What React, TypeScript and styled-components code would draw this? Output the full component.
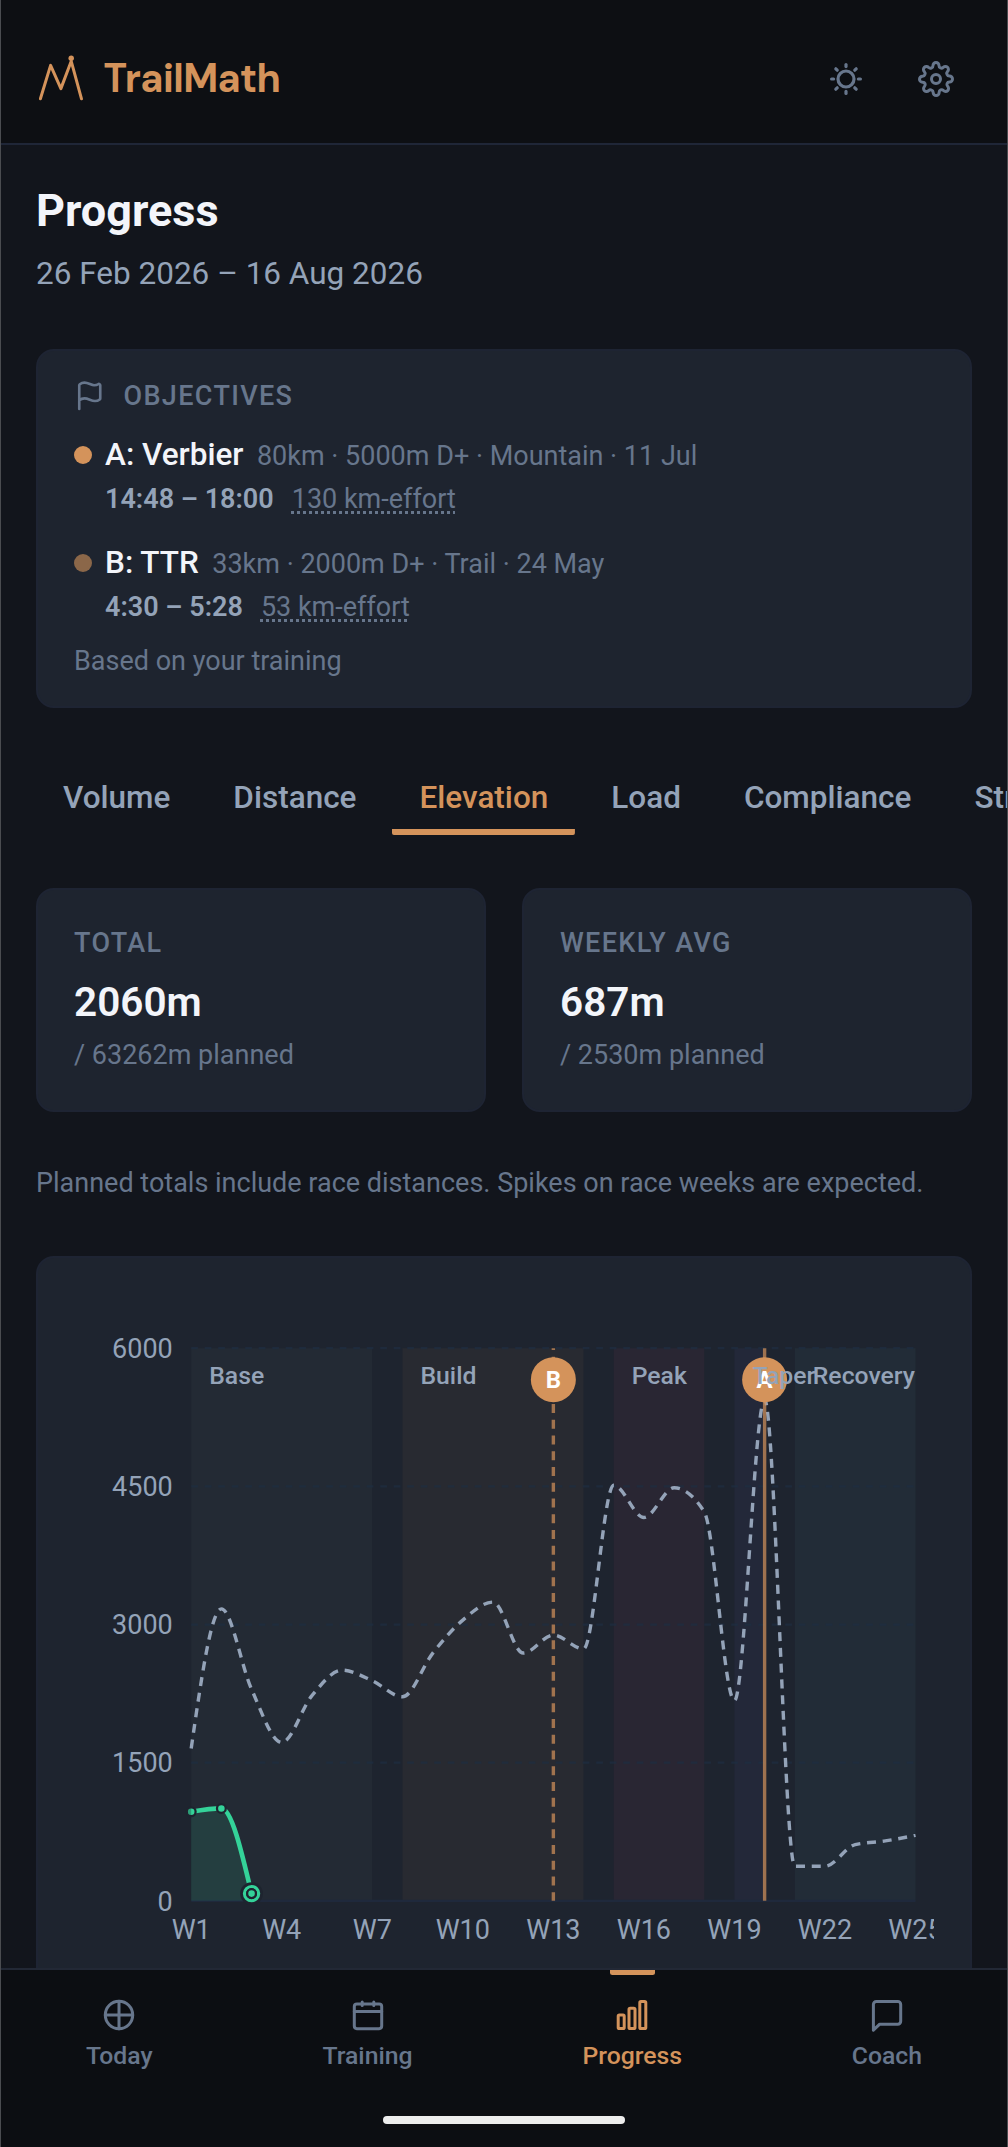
import React from "react";
import styled, { createGlobalStyle } from "styled-components";
import { Flag } from "lucide-react";

const c = {
  page: "#12151c",
  header: "#0d0f13",
  nav: "#0c0e12",
  card: "#1e242f",
  cardEdge: "#1e2433",
  line: "#1f2637",
  text: "#f3f5fa",
  soft: "#94a3b8",
  muted: "#67768c",
  accent: "#d4935b",
  green: "#34d399",
};

const Global = createGlobalStyle`
  * { box-sizing: border-box; }
  html, body { margin: 0; padding: 0; background: ${c.page}; }
  body { font-family: Roboto, "Liberation Sans", sans-serif; color: ${c.text}; }
`;

const Screen = styled.div`
  width: 1008px;
  height: 2147px;
  display: flex;
  flex-direction: column;
  overflow: hidden;
  background: ${c.page};
  box-shadow: inset 1px 0 #4a4c50, inset -1px 0 #4a4c50;
`;

const Header = styled.header`
  flex: none;
  height: 145px;
  margin: 0 1px;
  padding: 14px 53px 0 35px;
  display: flex;
  align-items: center;
  justify-content: space-between;
  background: ${c.header};
  border-bottom: 2px solid ${c.line};
`;

const Brand = styled.div`
  display: flex;
  align-items: center;
  gap: 13.5px;
`;

const BrandName = styled.span`
  font-family: "DM Sans", Inter, sans-serif;
  font-size: 39.5px;
  line-height: 48px;
  font-weight: 700;
  letter-spacing: -0.55px;
  color: ${c.accent};
`;

const HeaderActions = styled.div`
  display: flex;
  gap: 54px;
  color: ${c.muted};
`;

const Main = styled.main`
  flex: 1;
  min-height: 0;
  overflow: hidden;
  margin: 0 1px;
  padding: 39px 35px 0;
  display: flex;
  flex-direction: column;
`;

const Title = styled.h1`
  margin: 0;
  font-size: 45px;
  line-height: 54px;
  font-weight: 700;
`;

const Dates = styled.p`
  margin: 12px 0 0;
  font-size: 31.5px;
  line-height: 47px;
  color: ${c.soft};
`;

const Card = styled.section`
  flex: none;
  background: ${c.card};
  border: 2px solid ${c.cardEdge};
  border-radius: 18px;
`;

const ObjectivesCard = styled(Card)`
  height: 359px;
  margin-top: 52px;
  padding: 27px 36px 0;
`;

const Overline = styled.div`
  display: flex;
  align-items: center;
  gap: 18px;
  height: 36px;
  font-size: 27px;
  font-weight: 500;
  letter-spacing: 1.35px;
  color: ${c.muted};
`;

const Objective = styled.div<{ $first?: boolean }>`
  display: grid;
  grid-template-columns: 18px 1fr;
  column-gap: 13px;
  margin-top: ${(p) => (p.$first ? "17px" : "18px")};
`;

const Dot = styled.i<{ $dim?: boolean }>`
  width: 18px;
  height: 18px;
  margin-top: 15px;
  border-radius: 50%;
  background: ${(p) => (p.$dim ? "#8b6749" : c.accent)};
`;

const ObjectiveHead = styled.div`
  display: flex;
  align-items: baseline;
  gap: 13.5px;
  height: 47px;
  line-height: 47px;
`;

const ObjectiveName = styled.span`
  font-size: 31.5px;
  font-weight: 500;
`;

const Meta = styled.span`
  font-size: 27px;
  color: ${c.muted};
`;

const ObjectiveTimes = styled.div`
  grid-column: 2;
  display: flex;
  align-items: baseline;
  gap: 18px;
  height: 43px;
  line-height: 43px;
  font-size: 27px;
`;

const Estimate = styled.span`
  font-weight: 600;
  color: ${c.soft};
`;

const Effort = styled(Meta)`
  text-decoration: underline dotted;
  text-decoration-thickness: 3px;
  text-underline-offset: 3px;
  text-decoration-skip-ink: none;
`;

const Basis = styled.div`
  margin-top: 12px;
  font-size: 27px;
  line-height: 40px;
  color: ${c.muted};
`;

const Tabs = styled.nav`
  flex: none;
  display: flex;
  gap: 9px;
  height: 90px;
  margin: 45px -35px 0 0;
  overflow: hidden;
`;

const Tab = styled.button<{ $active?: boolean }>`
  flex: none;
  height: 82px;
  padding: 8px 27px 0;
  border: 0;
  background: linear-gradient(${(p) => (p.$active ? c.accent : "transparent")} 0 0) bottom / 100% 6px no-repeat;
  border-radius: 2px;
  font: 500 31.5px/74px Roboto, sans-serif;
  color: ${(p) => (p.$active ? c.accent : c.soft)};
  text-align: left;
`;

const Stats = styled.div`
  flex: none;
  display: grid;
  grid-template-columns: 1fr 1fr;
  gap: 36px;
  margin-top: 45px;
`;

const StatCard = styled(Card)`
  height: 224px;
  padding: 34px 36px 0;
`;

const StatLabel = styled.div`
  font-size: 27px;
  line-height: 38px;
  font-weight: 500;
  letter-spacing: 1.35px;
  color: ${c.muted};
`;

const StatValue = styled.div`
  margin-top: 9px;
  font-size: 40.5px;
  line-height: 62px;
  font-weight: 600;
`;

const StatPlan = styled.div`
  margin-top: 2px;
  font-size: 27px;
  line-height: 40px;
  color: ${c.muted};
`;

const Note = styled.p`
  margin: 51px 0 0;
  font-size: 27px;
  line-height: 40px;
  color: ${c.muted};
`;

const ChartCard = styled(Card)`
  height: 800px;
  margin-top: 53px;
  padding: 36px;
`;

const ChartSvg = styled.svg`
  display: block;
  width: 860px;
  height: 676px;
  overflow: hidden;
  font-family: Roboto, sans-serif;
`;

const NavBar = styled.nav`
  flex: none;
  height: 179px;
  margin: 0 1px;
  display: flex;
  flex-direction: column;
  align-items: center;
  background: ${c.nav};
  border-top: 2px solid #222835;
`;

const NavItems = styled.div`
  width: 100%;
  height: 146px;
  display: flex;
  justify-content: space-around;
`;

const NavItem = styled.a<{ $active?: boolean }>`
  display: flex;
  flex-direction: column;
  align-items: center;
  color: ${(p) => (p.$active ? c.accent : c.muted)};
  font-size: 24.75px;
  line-height: 30px;
  font-weight: 500;

  &::before {
    content: "";
    width: 45px;
    height: 5px;
    margin-bottom: 22px;
    border-radius: 0 0 2.5px 2.5px;
    background: ${(p) => (p.$active ? c.accent : "transparent")};
  }
`;

const NavLabel = styled.span`
  margin-top: 8px;
`;

const HomeBar = styled.div`
  width: 242px;
  height: 8px;
  border-radius: 4px;
  background: #ededed;
`;

/* ---------- icons ---------- */

const Logo = () => (
  <svg width="54" height="54" viewBox="0 0 54 54" fill="none" stroke={c.accent} strokeWidth="3" strokeLinecap="round" strokeLinejoin="round">
    <path d="M4.4 46.8 14.6 13.4 24.9 36.6 35.2 9.2 45.5 46.8" />
    <circle cx="35.2" cy="6.2" r="2.7" fill={c.accent} stroke="none" />
  </svg>
);

const SunIcon = () => (
  <svg width="36" height="36" viewBox="-18 -18 36 36" fill="none" stroke="currentColor" strokeWidth="3.2" strokeLinecap="round">
    <circle r="8" />
    {[0, 45, 90, 135, 180, 225, 270, 315].map((a) => (
      <path key={a} d="M0-12.4V-14.4" transform={`rotate(${a})`} />
    ))}
  </svg>
);

const GearIcon = () => (
  <svg width="36" height="36" viewBox="0 0 24 24" fill="none" stroke="currentColor" strokeWidth="2" strokeLinecap="round" strokeLinejoin="round">
    <circle cx="12" cy="12" r="3" />
    <path d="M19.4 15a1.65 1.65 0 0 0 .33 1.82l.06.06a2 2 0 1 1-2.83 2.83l-.06-.06a1.65 1.65 0 0 0-2.8 1.17V21a2 2 0 1 1-4 0v-.09A1.65 1.65 0 0 0 9 19.4a1.65 1.65 0 0 0-1.82.33l-.06.06a2 2 0 1 1-2.83-2.83l.06-.06a1.65 1.65 0 0 0-1.17-2.8H3a2 2 0 1 1 0-4h.09A1.65 1.65 0 0 0 4.6 9a1.65 1.65 0 0 0-.33-1.82l-.06-.06a2 2 0 1 1 2.83-2.83l.06.06A1.65 1.65 0 0 0 9 4.6h.08A1.65 1.65 0 0 0 10 3.09V3a2 2 0 1 1 4 0v.09a1.65 1.65 0 0 0 2.8 1.17l.06-.06a2 2 0 1 1 2.83 2.83l-.06.06A1.65 1.65 0 0 0 19.4 9v.08A1.65 1.65 0 0 0 20.91 10H21a2 2 0 1 1 0 4h-.09a1.65 1.65 0 0 0-1.51 1z" />
  </svg>
);

const NavSvg = ({ children }: { children: React.ReactNode }) => (
  <svg width="36" height="36" viewBox="0 0 36 36" fill="none" stroke="currentColor" strokeWidth="3" strokeLinecap="round" strokeLinejoin="round">
    {children}
  </svg>
);

const TodayIcon = () => (
  <NavSvg>
    <circle cx="18" cy="18" r="13.7" />
    <path d="M18 4.3V31.7M4.3 18H31.7" />
  </NavSvg>
);

const TrainingIcon = () => (
  <NavSvg>
    <rect x="4.3" y="7" width="27.4" height="24.7" rx="2.6" />
    <path d="M4.3 14.6H31.7M12.2 5V8.5M23.8 5V8.5" />
  </NavSvg>
);

const ProgressIcon = () => (
  <NavSvg>
    <rect x="4.2" y="18" width="6" height="13.6" rx="1.2" />
    <rect x="15" y="11.2" width="6" height="20.4" rx="1.2" />
    <rect x="25.8" y="4.5" width="6" height="27.1" rx="1.2" />
  </NavSvg>
);

const CoachIcon = () => (
  <NavSvg>
    <path d="M31.7 24.3a2.9 2.9 0 0 1-2.9 2.9H10.7L4.4 33.2V7.4a2.9 2.9 0 0 1 2.9-2.9H28.8a2.9 2.9 0 0 1 2.9 2.9z" />
  </NavSvg>
);

/* ---------- chart ---------- */

const PLAN = [
  1654, 3170, 2297, 1720, 2227, 2504, 2390, 2215, 2687, 3048, 3243, 2690, 2885, 2735, 4512, 4162, 4484, 4223,
  2174, 5440, 375, 375, 610, 650, 711,
];
const DONE = [967, 1003, 78];

// The SVG starts 74px from the left edge of the screen and 1294px from its top.
const X0 = 117.2;
const STEP = 30.18;
const TOP = 54.2;
const BOTTOM = 606.8;
const wx = (week: number) => X0 + (week - 1) * STEP;
const vy = (v: number) => BOTTOM - (v / 6000) * (BOTTOM - TOP);

function monotone(values: number[]): string {
  const p = values.map((v, i) => [wx(i + 1), vy(v)]);
  const n = p.length;
  const d = p.slice(1).map((q, i) => (q[1] - p[i][1]) / (q[0] - p[i][0]));
  const m: number[] = new Array(n).fill(0);
  for (let i = 1; i < n - 1; i++) {
    const s = Math.sign(d[i - 1]) + Math.sign(d[i]);
    m[i] = s * Math.min(Math.abs(d[i - 1]), Math.abs(d[i]), 0.25 * Math.abs(d[i - 1] + d[i]));
  }
  m[0] = (3 * d[0] - m[1]) / 2;
  m[n - 1] = (3 * d[n - 2] - m[n - 2]) / 2;
  let out = `M${p[0][0]},${p[0][1]}`;
  for (let i = 1; i < n; i++) {
    const h = (p[i][0] - p[i - 1][0]) / 3;
    out += `C${p[i - 1][0] + h},${p[i - 1][1] + h * m[i - 1]} ${p[i][0] - h},${p[i][1] - h * m[i]} ${p[i][0]},${p[i][1]}`;
  }
  return out;
}

const PHASES = [
  { name: "Base", from: 1, to: 7, fill: "#232a34" },
  { name: "Build", from: 8, to: 14, fill: "#282a31" },
  { name: "Peak", from: 15, to: 18, fill: "#292633" },
  { name: "Taper", from: 19, to: 20, fill: "#232839" },
  { name: "Recovery", from: 21, to: 25, fill: "#222c37" },
];

const RACES = [
  { name: "B", week: 13, dash: "9 6.75" },
  { name: "A", week: 20, dash: undefined },
];

const Chart = () => (
  <ChartSvg viewBox="0 0 860 676">
    {PHASES.map((p) => (
      <rect key={p.name} x={wx(p.from)} y={TOP} width={wx(p.to) - wx(p.from)} height={BOTTOM - TOP} fill={p.fill} />
    ))}
    {[1500, 3000, 4500, 6000].map((v) => (
      <path key={v} d={`M${X0} ${vy(v)}H${wx(25)}`} stroke="#1e2d42" strokeOpacity="0.7" strokeWidth="2.25" strokeDasharray="6.75 6.75" />
    ))}
    <path d={`M${X0} ${BOTTOM}H${wx(25)}`} stroke="#1f293c" strokeWidth="2.25" />
    {[0, 1500, 3000, 4500, 6000].map((v) => (
      <text key={v} x="98.8" y={vy(v) + 9.8} textAnchor="end" fontSize="27" fill={c.soft}>{v}</text>
    ))}
    {[1, 4, 7, 10, 13, 16, 19, 22, 25].map((w) => (
      <text key={w} x={wx(w)} y="644.6" textAnchor="middle" fontSize="27" fill={c.soft}>{`W${w}`}</text>
    ))}
    <path d={`${monotone(DONE)}L${wx(3)},${BOTTOM}L${X0},${BOTTOM}Z`} fill={c.green} fillOpacity="0.12" />
    <path d={monotone(PLAN)} fill="none" stroke={c.soft} strokeWidth="3.4" strokeDasharray="9 6.75" />
    <path d={monotone(DONE)} fill="none" stroke={c.green} strokeWidth="4.6" />
    <circle cx={wx(3)} cy={vy(DONE[2])} r="11.4" fill={c.card} />
    <circle cx={wx(3)} cy={vy(DONE[2])} r="7.1" fill="none" stroke={c.green} strokeWidth="3.2" />
    {DONE.map((v, i) => (
      <circle key={i} cx={wx(i + 1)} cy={vy(v)} r="4.4" fill={c.green} stroke={c.card} strokeWidth="2.25" />
    ))}
    <path d={`M${X0} ${vy(DONE[0]) - 3.4}a3.4 3.4 0 0 0 0 6.8z`} fill={c.card} fillOpacity="0.3" />
    {RACES.map((r) => (
      <g key={r.name}>
        <path d={`M${wx(r.week)} ${TOP}V${BOTTOM}`} stroke={c.accent} strokeOpacity="0.7" strokeWidth="3.4" strokeDasharray={r.dash} strokeDashoffset={r.dash ? 7.2 : 0} />
        <circle cx={wx(r.week)} cy="85.7" r="22.5" fill={c.accent} />
        <text x={wx(r.week)} y="93.6" textAnchor="middle" fontSize="24" fontWeight="700" fill="#fff">{r.name}</text>
      </g>
    ))}
    {PHASES.map((p) => (
      <text key={p.name} x={wx(p.from) + 18} y="90.2" fontSize="24.75" fontWeight="500" fill={c.soft}>{p.name}</text>
    ))}
  </ChartSvg>
);

export default function App() {
  return (
    <>
      <Global />
      <Screen>
        <Header>
          <Brand>
            <Logo />
            <BrandName>TrailMath</BrandName>
          </Brand>
          <HeaderActions>
            <SunIcon />
            <GearIcon />
          </HeaderActions>
        </Header>

        <Main>
          <Title>Progress</Title>
          <Dates>26 Feb 2026 – 16 Aug 2026</Dates>

          <ObjectivesCard>
            <Overline>
              <Flag size={31.5} strokeWidth={2} />
              OBJECTIVES
            </Overline>
            <Objective $first>
              <Dot />
              <ObjectiveHead>
                <ObjectiveName>A: Verbier</ObjectiveName>
                <Meta>80km · 5000m D+ · Mountain · 11 Jul</Meta>
              </ObjectiveHead>
              <ObjectiveTimes>
                <Estimate>14:48 – 18:00</Estimate>
                <Effort>130 km-effort</Effort>
              </ObjectiveTimes>
            </Objective>
            <Objective>
              <Dot $dim />
              <ObjectiveHead>
                <ObjectiveName>B: TTR</ObjectiveName>
                <Meta>33km · 2000m D+ · Trail · 24 May</Meta>
              </ObjectiveHead>
              <ObjectiveTimes>
                <Estimate>4:30 – 5:28</Estimate>
                <Effort>53 km-effort</Effort>
              </ObjectiveTimes>
            </Objective>
            <Basis>Based on your training</Basis>
          </ObjectivesCard>

          <Tabs>
            <Tab>Volume</Tab>
            <Tab>Distance</Tab>
            <Tab $active>Elevation</Tab>
            <Tab>Load</Tab>
            <Tab>Compliance</Tab>
            <Tab>Strength</Tab>
          </Tabs>

          <Stats>
            <StatCard>
              <StatLabel>TOTAL</StatLabel>
              <StatValue>2060m</StatValue>
              <StatPlan>/ 63262m planned</StatPlan>
            </StatCard>
            <StatCard>
              <StatLabel>WEEKLY AVG</StatLabel>
              <StatValue>687m</StatValue>
              <StatPlan>/ 2530m planned</StatPlan>
            </StatCard>
          </Stats>

          <Note>Planned totals include race distances. Spikes on race weeks are expected.</Note>

          <ChartCard>
            <Chart />
          </ChartCard>
        </Main>

        <NavBar>
          <NavItems>
            <NavItem>
              <TodayIcon />
              <NavLabel>Today</NavLabel>
            </NavItem>
            <NavItem>
              <TrainingIcon />
              <NavLabel>Training</NavLabel>
            </NavItem>
            <NavItem $active>
              <ProgressIcon />
              <NavLabel>Progress</NavLabel>
            </NavItem>
            <NavItem>
              <CoachIcon />
              <NavLabel>Coach</NavLabel>
            </NavItem>
          </NavItems>
          <HomeBar />
        </NavBar>
      </Screen>
    </>
  );
}
